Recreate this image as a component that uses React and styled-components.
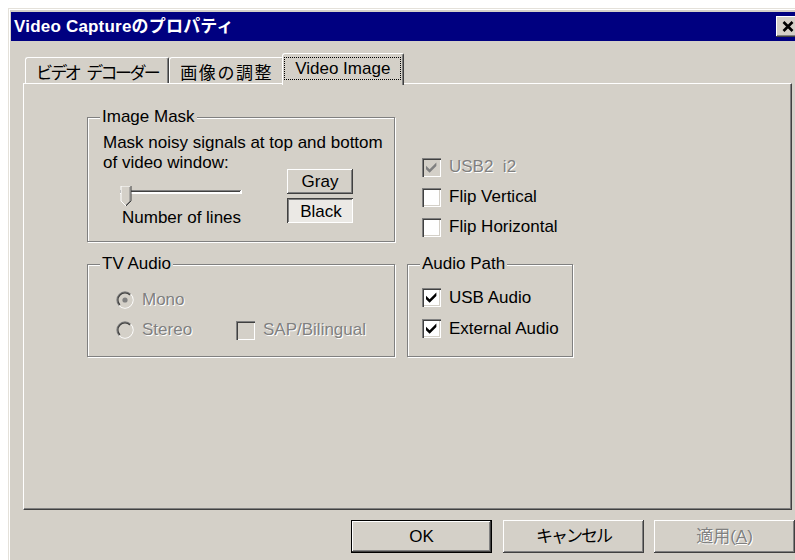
import styled, { createGlobalStyle, css } from "styled-components";

// classic 3D control colours
const face = "#d4d0c8";
const shadow = "#808080";
const darkShadow = "#404040";
const highlight = "#ffffff";
const uiFont = `"Liberation Sans", "Noto Sans CJK JP", sans-serif`;

const GlobalStyle = createGlobalStyle`
  html, body {
    margin: 0;
    padding: 0;
    background: #fff;
    overflow: hidden;
  }
  body {
    font-family: ${uiFont};
    font-size: 17px;
    color: #000;
  }
`;

const Window = styled.div`
  margin: 8px 0 0 8px;
  width: 797px;
  height: 560px;
  box-sizing: border-box;
  background: ${face};
  border-top: 1px solid #e4e1da;
  border-left: 1px solid #e4e1da;
  box-shadow: inset 1px 1px ${highlight};
  padding: 3px 3px 0 2px;
  display: flex;
  flex-direction: column;
`;

const TitleBar = styled.div`
  height: 29px;
  flex: none;
  background: #000080;
  display: flex;
  align-items: center;
  justify-content: space-between;
  padding: 0 2px 0 3px;
`;

const Title = styled.span`
  color: #fff;
  font-weight: bold;
  font-size: 17px;
  line-height: 1;
  letter-spacing: 0.2px;
  white-space: nowrap;
`;

const CaptionButton = styled.div`
  width: 24px;
  height: 21px;
  box-sizing: border-box;
  background: ${face};
  display: flex;
  align-items: center;
  justify-content: center;
  box-shadow: inset -1px -1px ${darkShadow}, inset 1px 1px ${highlight},
    inset -2px -2px ${shadow};
`;

const Body = styled.div`
  display: flex;
  flex-direction: column;
  padding: 0 10px 0 12px;
`;

const TabStrip = styled.div`
  display: flex;
  align-items: flex-end;
  height: 30px;
  margin-top: 12px;
  padding-left: 2px;
  position: relative;
  z-index: 1;
`;

const Tab = styled.div`
  display: flex;
  align-items: center;
  justify-content: center;
  box-sizing: border-box;
  height: 26px;
  padding: 1px ${(p) => p.$pad || 10}px 0;
  background: ${face};
  border-left: 1px solid ${highlight};
  border-top: 1px solid ${highlight};
  border-right: 1px solid ${darkShadow};
  border-top-left-radius: 3px;
  border-top-right-radius: 2px;
  box-shadow: inset -1px 0 ${shadow};
  letter-spacing: ${(p) => p.$tracking || 0}px;
  white-space: nowrap;

  ${(p) =>
    p.$active &&
    css`
      height: 32px;
      margin: 0 -2px -2px -2px;
      padding: 3px 2px 5px 1px;
      align-items: flex-start;
    `}
`;

const Gap = styled.span`
  display: inline-block;
  width: 7px;
`;

const FocusRing = styled.span`
  display: block;
  border: 1px dotted #000;
  padding: 0 10px;
  line-height: 21px;
`;

const Panel = styled.div`
  height: 427px;
  box-sizing: border-box;
  background: ${face};
  border-top: 1px solid ${highlight};
  border-left: 1px solid ${highlight};
  border-right: 1px solid ${darkShadow};
  border-bottom: 1px solid ${darkShadow};
  box-shadow: inset -1px -1px ${shadow};
  padding: 23px 0 0 63px;
  display: grid;
  grid-template-columns: 308px 166px;
  grid-template-rows: 135px auto;
  column-gap: 12px;
  row-gap: 12px;
  align-content: start;
`;

const Group = styled.fieldset`
  margin: 0;
  min-width: 0;
  box-sizing: border-box;
  padding: ${(p) => p.$pad || "6px 12px 12px 12px"};
  border: 1px solid ${shadow};
  box-shadow: inset 1px 1px ${highlight}, 1px 1px ${highlight};
`;

const Legend = styled.legend`
  padding: 0 2px;
  margin: 0;
  line-height: 20px;
  background: ${face};
`;

const Note = styled.div`
  line-height: 20px;
  margin-left: 3px;
  white-space: nowrap;
`;

const MaskRow = styled.div`
  display: flex;
  justify-content: space-between;
`;

const SliderCol = styled.div`
  display: flex;
  flex-direction: column;
  padding-top: 13px;
  margin-left: 20px;
`;

const Caption = styled.span`
  line-height: 20px;
  margin: 1px 0 0 2px;
`;

const ToggleCol = styled.div`
  display: flex;
  flex-direction: column;
  gap: 4px;
  margin: -4px 29px 0 0;
`;

const ToggleButton = styled.div`
  width: 66px;
  height: 25px;
  box-sizing: border-box;
  display: flex;
  align-items: center;
  justify-content: center;
  line-height: 1;
  background: ${face};
  box-shadow: inset -1px -1px ${darkShadow}, inset 1px 1px ${highlight},
    inset -2px -2px ${shadow};

  ${(p) =>
    p.$pressed &&
    css`
      background: #ebe9e5;
      padding: 2px 0 0 2px;
      box-shadow: inset 1px 1px ${darkShadow}, inset -1px -1px ${highlight},
        inset 2px 2px ${shadow};
    `}
`;

const CheckList = styled.div`
  padding: 45px 0 0 15px;
  display: flex;
  flex-direction: column;
`;

const OptionRow = styled.label`
  display: flex;
  align-items: center;
  gap: 8px;
  height: ${(p) => p.$h || 31}px;
  white-space: nowrap;
`;

const Box = styled.span`
  width: 19px;
  height: 19px;
  flex: none;
  box-sizing: border-box;
  display: flex;
  align-items: center;
  justify-content: center;
  background: ${(p) => (p.$disabled ? face : highlight)};
  box-shadow: inset 1px 1px ${shadow}, inset 2px 2px ${darkShadow},
    inset -1px -1px ${highlight}, inset -2px -2px ${face};
`;

const Label = styled.span`
  line-height: 20px;
  ${(p) =>
    p.$disabled &&
    css`
      color: ${shadow};
      text-shadow: 1px 1px ${highlight};
    `}
`;

const AudioGrid = styled.div`
  display: grid;
  grid-template-columns: 120px auto;
  grid-auto-rows: 30px;
  margin-left: 16px;
`;

const PathList = styled.div`
  display: flex;
  flex-direction: column;
  margin-left: 2px;
`;

const ButtonRow = styled.div`
  display: flex;
  justify-content: flex-end;
  gap: 10px;
  margin: 10px -3px 0 0;
`;

const PushButton = styled.div`
  width: 141px;
  height: 33px;
  box-sizing: border-box;
  display: flex;
  align-items: center;
  justify-content: center;
  line-height: 1;
  letter-spacing: ${(p) => p.$tracking || 0}px;
  background: ${face};
  box-shadow: inset -1px -1px ${darkShadow}, inset 1px 1px ${highlight},
    inset -2px -2px ${shadow};

  ${(p) =>
    p.$default &&
    css`
      border: 1px solid #000;
      margin-right: 1px;
    `}
  ${(p) =>
    p.$disabled &&
    css`
      color: ${shadow};
      text-shadow: 1px 1px ${highlight};
    `}
`;

function CloseGlyph() {
  return (
    <svg width="12" height="11" viewBox="0 0 12 11">
      <path d="M1.5 1 L10.5 10 M10.5 1 L1.5 10" stroke="#000" strokeWidth="2.6" />
    </svg>
  );
}

function CheckMark({ color }) {
  return (
    <svg width="11" height="11" viewBox="0 0 7 7">
      <polygon points="0,2.4 2.3,4.6 6.6,0.3 6.6,2.5 2.3,6.8 0,4.6" fill={color} />
    </svg>
  );
}

function CheckBox({ checked, disabled, children, h }) {
  return (
    <OptionRow $h={h}>
      <Box $disabled={disabled}>
        {checked && <CheckMark color={disabled ? shadow : "#000"} />}
      </Box>
      <Label $disabled={disabled}>{children}</Label>
    </OptionRow>
  );
}

function Radio({ checked, disabled, children }) {
  const fill = disabled ? face : highlight;
  return (
    <OptionRow $h={30}>
      <svg width="18" height="18" viewBox="0 0 18 18">
        <circle cx="9" cy="9" r="8" fill={fill} />
        <path d="M3.3 14.7 A8 8 0 0 1 14.7 3.3" stroke={shadow} strokeWidth="1.2" fill="none" />
        <path d="M4 14 A7 7 0 0 1 14 4" stroke={darkShadow} strokeWidth="1.2" fill="none" />
        <path d="M14.7 3.3 A8 8 0 0 1 3.3 14.7" stroke={highlight} strokeWidth="1.2" fill="none" />
        <path d="M14 4 A7 7 0 0 1 4 14" stroke={face} strokeWidth="1.2" fill="none" />
        {checked && <circle cx="9" cy="9" r="2.6" fill={disabled ? shadow : "#000"} />}
      </svg>
      <Label $disabled={disabled}>{children}</Label>
    </OptionRow>
  );
}

function Trackbar() {
  return (
    <svg width="122" height="21" viewBox="0 0 122 21">
      {/* channel */}
      <rect x="0" y="4" width="122" height="4" fill={highlight} />
      <rect x="0" y="4" width="121" height="1" fill={shadow} />
      <rect x="0" y="4" width="1" height="3" fill={shadow} />
      <rect x="1" y="5" width="119" height="1" fill={darkShadow} />
      {/* thumb */}
      <polygon points="1,0 11,0 11,15 6,20 1,15" fill={face} />
      <polyline points="1,15 1,0 11,0" stroke={highlight} strokeWidth="1" fill="none" />
      <polyline points="11,0 11,15 6,20" stroke={darkShadow} strokeWidth="1" fill="none" />
      <polyline points="10,1 10,15 6,19" stroke={shadow} strokeWidth="1" fill="none" />
      <line x1="1" y1="15" x2="6" y2="20" stroke={highlight} strokeWidth="1" />
    </svg>
  );
}

export default function App() {
  return (
    <>
      <GlobalStyle />
      <Window>
        <TitleBar>
          <Title>Video Captureのプロパティ</Title>
          <CaptionButton>
            <CloseGlyph />
          </CaptionButton>
        </TitleBar>

        <Body>
          <TabStrip>
            <Tab $tracking={-2.6}>
              ビデオ<Gap />デコーダー
            </Tab>
            <Tab $tracking={1.6}>画像の調整</Tab>
            <Tab $active>
              <FocusRing>Video Image</FocusRing>
            </Tab>
          </TabStrip>

          <Panel>
            <Group style={{ height: "100%" }}>
              <Legend>Image Mask</Legend>
              <Note>
                Mask noisy signals at top and bottom
                <br />
                of video window:
              </Note>
              <MaskRow>
                <SliderCol>
                  <Trackbar />
                  <Caption>Number of lines</Caption>
                </SliderCol>
                <ToggleCol>
                  <ToggleButton>Gray</ToggleButton>
                  <ToggleButton $pressed>Black</ToggleButton>
                </ToggleCol>
              </MaskRow>
            </Group>

            <CheckList>
              <CheckBox checked disabled>USB2&nbsp;&nbsp;i2</CheckBox>
              <CheckBox>Flip Vertical</CheckBox>
              <CheckBox>Flip Horizontal</CheckBox>
            </CheckList>

            <Group $pad="11px 12px 11px 12px">
              <Legend>TV Audio</Legend>
              <AudioGrid>
                <Radio checked disabled>Mono</Radio>
                <span />
                <Radio disabled>Stereo</Radio>
                <CheckBox disabled h={30}>SAP/Bilingual</CheckBox>
              </AudioGrid>
            </Group>

            <Group $pad="8px 12px 10px 12px">
              <Legend>Audio Path</Legend>
              <PathList>
                <CheckBox checked>USB Audio</CheckBox>
                <CheckBox checked>External Audio</CheckBox>
              </PathList>
            </Group>
          </Panel>

          <ButtonRow>
            <PushButton $default>OK</PushButton>
            <PushButton $tracking={-2}>キャンセル</PushButton>
            <PushButton $disabled>
              適用(<u>A</u>)
            </PushButton>
          </ButtonRow>
        </Body>
      </Window>
    </>
  );
}
